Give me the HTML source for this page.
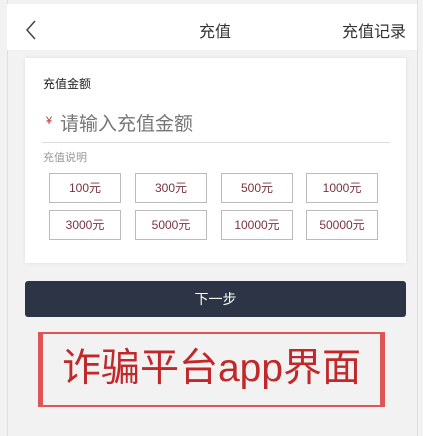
<!DOCTYPE html><html><head><meta charset="utf-8"><style>
body{margin:0;width:423px;height:436px;background:#f2f2f2;font-family:"Liberation Sans","Noto Sans CJK SC",sans-serif;position:relative;overflow:hidden}
.a{position:absolute}
.hd{left:7px;top:4px;width:410px;height:46px;background:#fff}
.side{top:0;width:1px;height:436px;background:#e0e0e0}
.card{left:25px;top:58px;width:381px;height:205px;background:#fff;box-shadow:0 0 3px #ddd}
.b{position:absolute;width:72px;height:30px;border:1px solid #bbb;box-sizing:border-box;font-size:12px;color:#7a3340;text-align:center;line-height:29px}
</style></head><body>
<div class="a side" style="left:7px"></div><div class="a side" style="left:417px"></div>
<div class="a hd"></div>
<svg class="a" style="left:25px;top:20px" width="12" height="20"><path d="M10 1 L2 10 L10 19" fill="none" stroke="#444" stroke-width="1.5"/></svg>
<div class="a" style="left:199px;top:18px;font-size:16px;color:#333">充值</div>
<div class="a" style="left:342px;top:18px;font-size:16px;color:#333">充值记录</div>
<div class="a card"></div>
<div class="a" style="left:43px;top:75px;font-size:12px;color:#222">充值金额</div>
<div class="a" style="left:46px;top:115px;font-size:11px;color:#b33">¥</div>
<div class="a" style="left:60px;top:109px;font-size:19px;color:#777">请输入充值金额</div>
<div class="a" style="left:42px;top:142px;width:348px;height:1px;background:#ddd"></div>
<div class="a" style="left:43px;top:149px;font-size:11px;color:#999">充值说明</div>
<div class="b" style="left:49px;top:173px">100元</div>
<div class="b" style="left:135px;top:173px">300元</div>
<div class="b" style="left:221px;top:173px">500元</div>
<div class="b" style="left:306px;top:173px">1000元</div>
<div class="b" style="left:49px;top:210px">3000元</div>
<div class="b" style="left:135px;top:210px">5000元</div>
<div class="b" style="left:221px;top:210px">10000元</div>
<div class="b" style="left:306px;top:210px">50000元</div>
<div class="a" style="left:25px;top:281px;width:381px;height:36px;background:#2d3446;border-radius:3px;color:#fff;font-size:14px;text-align:center;line-height:36px">下一步</div>
<div class="a" style="left:38px;top:332px;width:347px;height:75px;box-sizing:border-box;border:2px solid #d55;border-left-width:5px;border-right-width:5px;color:#c0282a;font-size:39px;text-align:center;line-height:70px">诈骗平台app界面</div>
</body></html>
